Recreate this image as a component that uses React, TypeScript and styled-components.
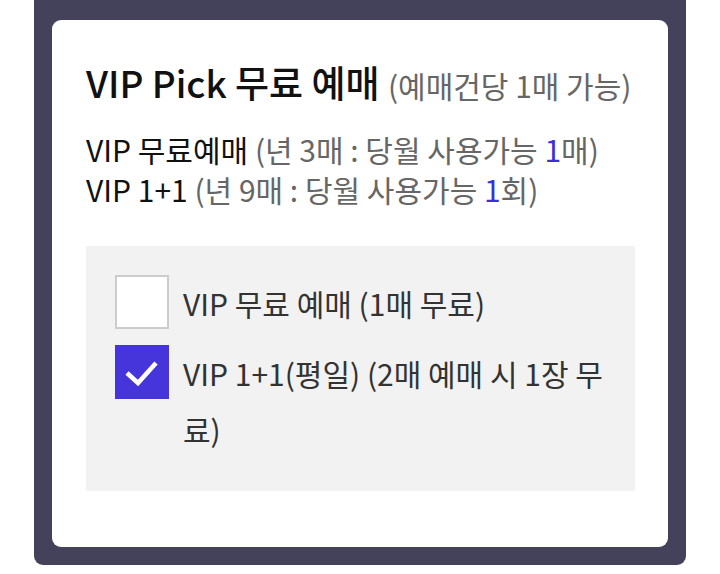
import React from 'react';
import styled, { createGlobalStyle } from 'styled-components';

const GlobalStyle = createGlobalStyle`
  html, body {
    margin: 0;
    padding: 0;
    background: #ffffff;
  }
  body {
    font-family: "Noto Sans CJK KR", "Noto Sans", sans-serif;
  }
`;

const Page = styled.div`
  display: flex;
  justify-content: center;
  width: 720px;
  height: 574px;
`;

const Frame = styled.div`
  width: 652px;
  height: 565px;
  box-sizing: border-box;
  padding: 20px 18px 18px 18px;
  background: #44425a;
  border-radius: 0 0 9px 9px;
`;

const Card = styled.div`
  display: flex;
  flex-direction: column;
  height: 100%;
  box-sizing: border-box;
  padding: 40px 33px 0 34px;
  background: #ffffff;
  border-radius: 9px;
`;

const Title = styled.h2`
  margin: 0;
  font-size: 37px;
  font-weight: 500;
  line-height: 44px;
  color: #111111;
  white-space: nowrap;
`;

const TitleNote = styled.span`
  font-size: 30px;
  font-weight: 400;
  color: #666666;
`;

const InfoList = styled.div`
  display: flex;
  flex-direction: column;
  margin-top: 22px;
`;

const InfoLine = styled.p`
  margin: 0;
  font-size: 30px;
  line-height: 40px;
  color: #111111;
  white-space: nowrap;
`;

const Muted = styled.span`
  color: #666666;
`;

const Count = styled.span`
  color: #3b2fd6;
`;

const OptionBox = styled.div`
  display: flex;
  flex-direction: column;
  gap: 14px;
  margin-top: 37px;
  padding: 29px 29px 34px 29px;
  background: #f2f2f2;
`;

const OptionRow = styled.label`
  display: flex;
  align-items: flex-start;
  gap: 14px;
`;

const Box = styled.span<{ $checked?: boolean }>`
  display: flex;
  align-items: center;
  justify-content: center;
  flex: none;
  width: 54px;
  height: 54px;
  box-sizing: border-box;
  background: ${p => (p.$checked ? '#4535db' : '#ffffff')};
  border: ${p => (p.$checked ? 'none' : '2px solid #cccccc')};
`;

const OptionText = styled.span`
  font-size: 30px;
  line-height: 56px;
  color: #333333;
  word-break: break-all;
`;

function Check() {
  return (
    <svg width="54" height="54" viewBox="0 0 54 54">
      <path d="M12 28 L23 38 L41 18" fill="none" stroke="#ffffff" strokeWidth="4.5" />
    </svg>
  );
}

function App() {
  return (
    <Page>
      <GlobalStyle />
      <Frame>
        <Card>
          <Title>
            VIP Pick 무료 예매 <TitleNote>(예매건당 1매 가능)</TitleNote>
          </Title>
          <InfoList>
            <InfoLine>
              VIP 무료예매 <Muted>(년 3매 : 당월 사용가능 <Count>1</Count>매)</Muted>
            </InfoLine>
            <InfoLine>
              VIP 1+1 <Muted>(년 9매 : 당월 사용가능 <Count>1</Count>회)</Muted>
            </InfoLine>
          </InfoList>
          <OptionBox>
            <OptionRow>
              <Box />
              <OptionText>VIP 무료 예매 (1매 무료)</OptionText>
            </OptionRow>
            <OptionRow>
              <Box $checked>
                <Check />
              </Box>
              <OptionText>VIP 1+1(평일) (2매 예매 시 1장 무료)</OptionText>
            </OptionRow>
          </OptionBox>
        </Card>
      </Frame>
    </Page>
  );
}

export default App;
